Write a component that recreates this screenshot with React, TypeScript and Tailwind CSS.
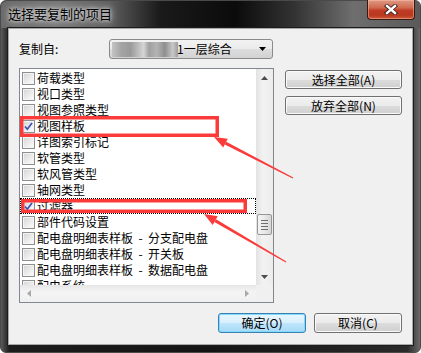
import React from "react";

type Item = { label: string; checked?: boolean; focus?: boolean };

const items: Item[] = [
  { label: "荷载类型" },
  { label: "视口类型" },
  { label: "视图参照类型" },
  { label: "视图样板", checked: true },
  { label: "详图索引标记" },
  { label: "软管类型" },
  { label: "软风管类型" },
  { label: "轴网类型" },
  { label: "过滤器", checked: true, focus: true },
  { label: "部件代码设置" },
  { label: "配电盘明细表样板  -  分支配电盘" },
  { label: "配电盘明细表样板  -  开关板" },
  { label: "配电盘明细表样板  -  数据配电盘" },
  { label: "配电系统" },
];

const btn =
  "flex items-center justify-center rounded-[3px] border border-[#707070] bg-[linear-gradient(180deg,#f2f2f2_0%,#ebebeb_50%,#dddddd_51%,#cfcfcf_100%)] shadow-[inset_0_0_0_1px_#fafafa] text-[12px] text-black";

function Checkbox({ checked }: { checked?: boolean }) {
  return (
    <div className="relative h-[13px] w-[13px] shrink-0 border border-[#8e8f8f] bg-[linear-gradient(135deg,#d4d4d4_0%,#f2f2f2_70%,#ffffff_100%)] shadow-[inset_0_0_0_1px_#f4f4f4]">
      {checked && (
        <svg className="absolute left-0 top-0" width="11" height="11" viewBox="0 0 11 11">
          <path d="M2 5.5 L4.3 8.2 L9 2" fill="none" stroke="#3c50b4" strokeWidth="1.7" />
        </svg>
      )}
    </div>
  );
}

function Tri({ dir, color = "#4d4d4d" }: { dir: "up" | "down" | "left" | "right"; color?: string }) {
  const d = {
    up: "M0 4 L3.5 0 L7 4 Z",
    down: "M0 0 L7 0 L3.5 4 Z",
    left: "M4 0 L4 7 L0 3.5 Z",
    right: "M0 0 L4 3.5 L0 7 Z",
  }[dir];
  const vertical = dir === "up" || dir === "down";
  return (
    <svg width={vertical ? 7 : 4} height={vertical ? 4 : 7} viewBox={vertical ? "0 0 7 4" : "0 0 4 7"}>
      <path d={d} fill={color} />
    </svg>
  );
}

export default function App() {
  return (
    <div className="relative h-[353px] w-[421px] overflow-hidden font-['Noto_Sans_CJK_SC','Liberation_Sans',sans-serif]">
      <div className="flex h-full w-full flex-col rounded-[6px] border border-[#4a4a4a] bg-[linear-gradient(90deg,#5a5a5a_0%,#1c1c1c_2%,#141414_50%,#2a2a2a_97%,#6a6a6a_100%)]">
        {/* title bar */}
        <div className="flex h-[27px] items-start justify-between rounded-t-[6px] bg-[linear-gradient(90deg,#6a6a6a_0%,#767676_14%,#5e5e5e_26%,#1a1a1a_38%,#0b0b0b_56%,#333333_70%,#6e6e6e_84%,#5a5a5a_100%)] pl-[7px] pr-[5px]">
          <span className="mt-[4px] text-[13px] leading-[18px] text-black [text-shadow:0_0_6px_#d8d8d8,0_0_10px_#bdbdbd,0_0_3px_#e0e0e0]">
            选择要复制的项目
          </span>
          <div className="-mt-[1px] flex h-[20px] w-[48px] items-center justify-center rounded-b-[4px] border border-t-0 border-[#3a1710] bg-[linear-gradient(180deg,#e09a86_0%,#d06a50_40%,#c03c24_55%,#b83820_80%,#cf5a3a_100%)] shadow-[inset_0_0_0_1px_rgba(255,200,180,0.45)]">
            <svg width="14" height="11" viewBox="0 0 14 11">
              <path d="M3 2 L11 9 M11 2 L3 9" stroke="#3a2018" strokeWidth="4.2" strokeLinecap="square" />
              <path d="M3 2 L11 9 M11 2 L3 9" stroke="#ffffff" strokeWidth="2.4" strokeLinecap="square" />
            </svg>
          </div>
        </div>

        {/* client area */}
        <div className="mx-[7px] flex h-[317px] flex-col border border-[#a8a8a8] bg-[#f0f0f0] pl-[10px] pr-[10px] pt-[10px] pb-[11px] text-[12px] text-black shadow-[0_0_0_1px_#1c1c1c]">
          <div className="flex h-[20px] items-center">
            <div className="w-[90px]">复制自:</div>
            <div className="flex h-[20px] w-[164px] items-center rounded-[3px] border border-[#8a8a8a] bg-[linear-gradient(180deg,#f2f2f2_0%,#ebebeb_50%,#dddddd_51%,#d2d2d2_100%)] pl-[2px] pr-[6px]">
              <div className="h-[15px] w-[66px] bg-[linear-gradient(90deg,#c4c4c4_0%,#a4a4a4_14%,#9a9a9a_28%,#bdbdbd_40%,#d6d6d6_48%,#a0a0a0_56%,#b4b4b4_68%,#8e8e8e_80%,#c8c8c8_92%,#9c9c9c_100%)] blur-[0.6px]" />
              <span className="-ml-[1px] leading-[16px]">1一层综合</span>
              <div className="ml-auto">
                <Tri dir="down" color="#000" />
              </div>
            </div>
          </div>

          <div className="mt-[9px] flex">
            {/* list box */}
            <div className="flex h-[235px] w-[255px] border border-[#828790] bg-white">
              <div className="flex w-[236px] flex-col">
                <div className="h-[216px] overflow-hidden pt-[1px]">
                  {items.map((it) => (
                    <div
                      key={it.label}
                      className={`flex h-[16px] items-center gap-[2px] whitespace-pre pl-[2px] leading-[16px] ${
                        it.focus ? "outline-1 -outline-offset-1 outline-dotted outline-black" : ""
                      }`}
                    >
                      <Checkbox checked={it.checked} />
                      <span>{it.label}</span>
                    </div>
                  ))}
                </div>
                <div className="flex h-[17px] items-center justify-between bg-[linear-gradient(180deg,#e6e6e6_0%,#f4f4f4_40%,#f0f0f0_100%)] px-[7px]">
                  <Tri dir="left" color="#a8a8a8" />
                  <Tri dir="right" color="#a8a8a8" />
                </div>
              </div>
              <div className="flex w-[17px] flex-col">
                <div className="flex h-[216px] flex-col bg-[linear-gradient(90deg,#e2e2e2_0%,#f2f2f2_40%,#ececec_100%)]">
                  <div className="flex h-[17px] items-center justify-center">
                    <Tri dir="up" />
                  </div>
                  <div className="h-[128px]" />
                  <div className="mx-[1px] flex h-[21px] flex-col items-center justify-center gap-[2px] rounded-[2px] border border-[#979797] bg-[linear-gradient(90deg,#f4f4f4_0%,#e9e9e9_50%,#d6d6d6_100%)]">
                    <div className="h-[1px] w-[7px] bg-[#6e6e6e]" />
                    <div className="h-[1px] w-[7px] bg-[#6e6e6e]" />
                    <div className="h-[1px] w-[7px] bg-[#6e6e6e]" />
                    <div className="h-[1px] w-[7px] bg-[#6e6e6e]" />
                  </div>
                  <div className="flex-1" />
                  <div className="flex h-[17px] items-center justify-center">
                    <Tri dir="down" />
                  </div>
                </div>
                <div className="h-[17px] bg-[#f0f0f0]" />
              </div>
            </div>

            {/* side buttons */}
            <div className="ml-[11px] mt-[2px] flex w-[117px] flex-col gap-[7px]">
              <div className={`${btn} h-[19px]`}>选择全部(A)</div>
              <div className={`${btn} h-[19px]`}>放弃全部(N)</div>
            </div>
          </div>

          <div className="mt-[10px] flex justify-end gap-[8px]">
            <div className="flex h-[20px] w-[88px] items-center justify-center rounded-[3px] border border-[#3c7fb1] bg-[linear-gradient(180deg,#eaf6fd_0%,#d9f0fc_50%,#bee6fd_51%,#a7d9f5_100%)] shadow-[inset_0_0_0_1px_#7fdcff]">
              确定(O)
            </div>
            <div className={`${btn} h-[20px] w-[88px]`}>取消(C)</div>
          </div>
        </div>
      </div>

      {/* annotations */}
      <svg className="pointer-events-none absolute left-0 top-0" width="421" height="353" viewBox="0 0 421 353">
        <rect x="21.75" y="117.75" width="195.5" height="17.5" fill="none" stroke="#fb3a3a" strokeWidth="3.5" />
        <rect x="22.75" y="200.75" width="222.5" height="10.5" fill="none" stroke="#fb3a3a" strokeWidth="3.5" />
        <polygon points="293.3,177.5 226.2,141.8 224.8,144.4 292.7,178.5" fill="#fb3a3a" />
        <polygon points="214,137 227.8,138.7 223.2,147.5" fill="#fb3a3a" />
        <polygon points="286.3,261.5 216.0,219.3 214.4,221.9 285.7,262.5" fill="#fb3a3a" />
        <polygon points="204,214 217.7,216.3 212.7,224.9" fill="#fb3a3a" />
      </svg>
    </div>
  );
}
